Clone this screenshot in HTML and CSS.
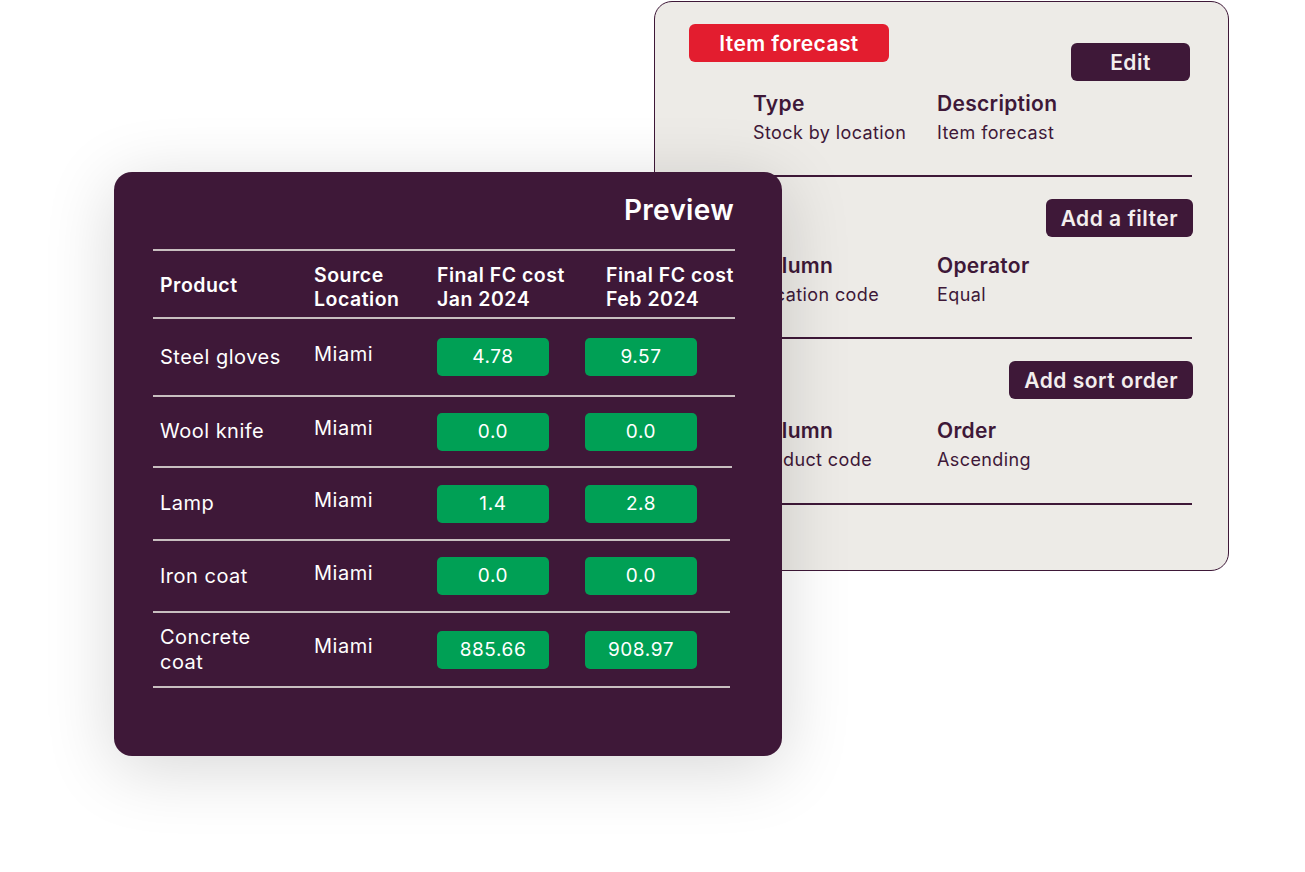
FILE: index.html
```html
<!DOCTYPE html>
<html lang="en">
<head>
  <meta charset="UTF-8" />
  <meta name="viewport" content="width=device-width, initial-scale=1.0"/>
  <title>Item forecast preview</title>
  <link rel="stylesheet" href="styles.css">
</head>
<body>
  <div class="canvas">
    <div class="settings-card">
      <div class="section section-main">
        <div class="section-top">
          <span class="badge">Item forecast</span>
          <span class="btn btn-edit">Edit</span>
        </div>
        <div class="fields">
          <div class="field">
            <div class="field-label">Type</div>
            <div class="field-value">Stock by location</div>
          </div>
          <div class="field">
            <div class="field-label">Description</div>
            <div class="field-value">Item forecast</div>
          </div>
        </div>
      </div>

      <div class="section section-filter">
        <div class="section-top">
          <span class="btn">Add a filter</span>
        </div>
        <div class="fields">
          <div class="field">
            <div class="field-label">Column</div>
            <div class="field-value">Location code</div>
          </div>
          <div class="field">
            <div class="field-label">Operator</div>
            <div class="field-value">Equal</div>
          </div>
        </div>
      </div>

      <div class="section section-sort">
        <div class="section-top">
          <span class="btn">Add sort order</span>
        </div>
        <div class="fields">
          <div class="field">
            <div class="field-label">Column</div>
            <div class="field-value">Product code</div>
          </div>
          <div class="field">
            <div class="field-label">Order</div>
            <div class="field-value">Ascending</div>
          </div>
        </div>
      </div>
    </div>

    <div class="preview-card">
      <h2 class="preview-title">Preview</h2>
      <div class="table">
        <div class="row head">
          <div class="cell">Product</div>
          <div class="cell">Source<br>Location</div>
          <div class="cell">Final FC cost<br>Jan 2024</div>
          <div class="cell cell-feb">Final FC cost<br>Feb 2024</div>
        </div>
        <div class="row r1">
          <div class="cell">Steel gloves</div>
          <div class="cell loc">Miami</div>
          <div class="cell"><span class="pill">4.78</span></div>
          <div class="cell"><span class="pill">9.57</span></div>
        </div>
        <div class="row r2">
          <div class="cell">Wool knife</div>
          <div class="cell loc">Miami</div>
          <div class="cell"><span class="pill">0.0</span></div>
          <div class="cell"><span class="pill">0.0</span></div>
        </div>
        <div class="row r3">
          <div class="cell">Lamp</div>
          <div class="cell loc">Miami</div>
          <div class="cell"><span class="pill">1.4</span></div>
          <div class="cell"><span class="pill">2.8</span></div>
        </div>
        <div class="row r4">
          <div class="cell">Iron coat</div>
          <div class="cell loc">Miami</div>
          <div class="cell"><span class="pill">0.0</span></div>
          <div class="cell"><span class="pill">0.0</span></div>
        </div>
        <div class="row r5">
          <div class="cell">Concrete<br>coat</div>
          <div class="cell loc">Miami</div>
          <div class="cell"><span class="pill">885.66</span></div>
          <div class="cell"><span class="pill">908.97</span></div>
        </div>
      </div>
    </div>
  </div>
</body>
</html>
```

FILE: styles.css
```css
body {
  margin: 0;
  padding: 0;
  background: #fff;
  font-family: "Inter", "Open Sans", sans-serif;
  color: #3e1838;
  overflow: hidden;
}
.canvas {
  position: relative;
  width: 1305px;
  height: 872px;
}

/* back window */
.settings-card {
  position: absolute;
  left: 654px;
  top: 1px;
  width: 575px;
  height: 570px;
  box-sizing: border-box;
  background: #edebe7;
  border: 1px solid #3e1838;
  border-radius: 18px;
  padding: 22px 36px 0 34px;
}
.section {
  border-bottom: 2px solid #3e1838;
}
.section-top {
  display: flex;
  justify-content: space-between;
  align-items: flex-start;
}
.section-filter .section-top,
.section-sort .section-top {
  justify-content: flex-end;
  margin-right: -1px;
}
.badge {
  display: inline-block;
  width: 200px;
  height: 38px;
  line-height: 39px;
  text-align: center;
  background: #e31d2f;
  color: #fff;
  border-radius: 6px;
  font-size: 21px;
  font-weight: 600;
  letter-spacing: 0.4px;
}
.btn {
  display: inline-block;
  height: 38px;
  line-height: 39px;
  padding: 0 15px;
  background: #3e1838;
  color: #f3eeee;
  border-radius: 6px;
  font-size: 21px;
  font-weight: 600;
  letter-spacing: 0.5px;
}
.btn-edit {
  width: 119px;
  box-sizing: border-box;
  text-align: center;
  margin-top: 19px;
  margin-right: 2px;
}
.fields {
  display: grid;
  grid-template-columns: 184px 184px;
  padding-left: 64px;
}
.field-label {
  font-size: 21px;
  font-weight: 600;
  line-height: 26px;
  letter-spacing: 0.3px;
}
.field-value {
  font-size: 18px;
  line-height: 24px;
  margin-top: 4px;
  letter-spacing: 0.4px;
}
.section-main .fields {
  margin-top: 10px;
  padding-bottom: 30px;
}
.section-filter {
  padding-top: 22px;
}
.section-filter .fields {
  margin-top: 16px;
  padding-bottom: 30px;
}
.section-sort {
  padding-top: 22px;
}
.section-sort .fields {
  margin-top: 19px;
  padding-bottom: 31px;
}

/* front window */
.preview-card {
  position: absolute;
  left: 114px;
  top: 172px;
  width: 668px;
  height: 584px;
  box-sizing: border-box;
  background: #3e1838;
  border-radius: 18px;
  padding: 20px 47px 0 39px;
  color: #fff;
  box-shadow: 0 12px 70px rgba(0, 0, 0, 0.16);
}
.preview-title {
  margin: 0 0 21px;
  text-align: right;
  font-size: 28px;
  font-weight: 600;
  line-height: 36px;
  padding-right: 1px;
  letter-spacing: 0.3px;
}
.table {
  border-top: 2px solid #c8bfc0;
}
.row {
  display: grid;
  grid-template-columns: 154px 123px 148px 1fr;
  align-items: center;
  box-sizing: border-box;
  border-bottom: 2px solid #c8bfc0;
  font-size: 20px;
  line-height: 25px;
  letter-spacing: 0.5px;
}
.cell {
  padding-left: 7px;
}
.head {
  font-weight: 600;
  font-size: 19.5px;
  line-height: 24px;
  padding: 12px 0 6px;
}
.head .cell:first-child {
  margin-top: -4px;
}
.cell-feb {
  padding-left: 28px;
}
.loc {
  margin-top: -6px;
}
.pill {
  display: block;
  width: 112px;
  height: 38px;
  line-height: 38px;
  text-align: center;
  background: #00a055;
  border-radius: 5px;
  font-size: 19px;
  letter-spacing: 0.6px;
}
.r1 { height: 78px; }
.r2 { height: 71px; margin-right: 3px; }
.r3 { height: 73px; margin-right: 5px; }
.r4 { height: 72px; margin-right: 5px; }
.r5 { height: 75px; margin-right: 5px; }
```
